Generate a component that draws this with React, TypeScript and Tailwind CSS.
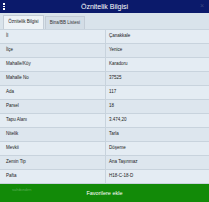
import React from "react";

const rows: [string, string][] = [
  ["İl", "Çanakkale"],
  ["İlçe", "Yenice"],
  ["Mahalle/Köy", "Karadoru"],
  ["Mahalle No", "37525"],
  ["Ada", "117"],
  ["Parsel", "18"],
  ["Tapu Alanı", "3.474,20"],
  ["Nitelik", "Tarla"],
  ["Mevkii", "Döşeme"],
  ["Zemin Tip", "Ana Taşınmaz"],
  ["Pafta", "H18-C-18-D"],
];

export default function App() {
  return (
    <div
      className="w-[209px] h-[202px] flex flex-col bg-[#dfe7ee] overflow-hidden relative"
      style={{ fontFamily: "'Liberation Sans', Arial, sans-serif" }}
    >
      {/* Header */}
      <div className="h-[13px] bg-[#0b1a6b] flex items-center relative shrink-0">
        <div className="absolute left-[3px] top-[3px] flex flex-col gap-[1px]">
          <span className="w-[1.5px] h-[1.5px] bg-white" />
          <span className="w-[1.5px] h-[1.5px] bg-white" />
          <span className="w-[1.5px] h-[1.5px] bg-white" />
        </div>
        <div className="flex-1 text-center text-white text-[7px] leading-none">
          Öznitelik Bilgisi
        </div>
        <div className="absolute right-[5px] top-[2px] text-[#3a4680] text-[7px] leading-none">×</div>
      </div>

      {/* Tabs */}
      <div className="h-[17px] bg-[#d9e3eb] flex items-end px-[3px] gap-[1px] shrink-0 border-b border-[#c9d4de]">
        <div className="h-[14px] w-[41px] bg-[#edf2f6] border border-[#c3ccd6] border-b-0 flex items-center justify-center text-[4.5px] text-[#222]">
          Öznitelik Bilgisi
        </div>
        <div className="h-[13px] w-[40px] bg-[#d3dde6] border border-[#c3ccd6] border-b-0 flex items-center justify-center text-[4.5px] text-[#333]">
          Bina/BB Listesi
        </div>
      </div>

      {/* Table */}
      <div className="flex flex-col h-[154px] shrink-0">
        {rows.map(([k, v], i) => (
          <div
            key={k}
            className={`h-[14px] flex text-[4.5px] text-[#222] border-b border-[#c8d3dd] ${
              i % 2 === 0 ? "bg-[#e4ecf3]" : "bg-[#dde6ee]"
            }`}
          >
            <div className="w-[106px] pl-[6px] flex items-center border-r border-[#c8d3dd]">{k}</div>
            <div className="flex-1 pl-[3px] flex items-center">{v}</div>
          </div>
        ))}
      </div>

      {/* Footer button */}
      <div className="flex-1 bg-[#128a08] flex items-center justify-center text-white text-[5.5px] relative">
        Favorilere ekle
        <span className="absolute left-[12px] top-[3px] text-[4px] text-white/30">sahibinden</span>
      </div>
    </div>
  );
}
